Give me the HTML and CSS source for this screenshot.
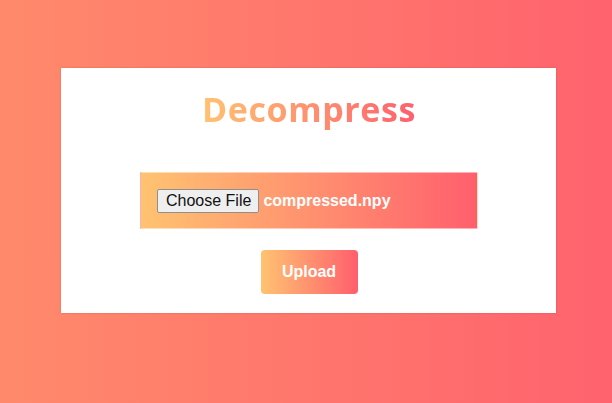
FILE: index.html
```html
<!DOCTYPE html>
<html lang="en">
<head>
<meta charset="utf-8">
<title>Decompress</title>
<link rel="stylesheet" href="styles.css">
</head>
<body>
  <main class="card">
    <h1 class="title">Decompress</h1>
    <form class="form">
      <div class="file-box">
        <span class="file-button">Choose File</span>
        <span class="file-name">compressed.npy</span>
      </div>
      <button type="button" class="upload">Upload</button>
    </form>
  </main>
</body>
</html>
```

FILE: styles.css
```css
html, body {
  height: 100%;
}
body {
  margin: 0;
  background: linear-gradient(to right, #ff8a6b, #ff636e);
  font-family: "Liberation Sans", Arial, sans-serif;
  overflow: hidden;
}
.card {
  box-sizing: border-box;
  width: 495px;
  height: 245px;
  margin: 68px 0 0 61px;
  padding-top: 19px;
  background: #fff;
  box-shadow: 0 0 2px rgba(0, 0, 0, 0.18);
  display: flex;
  flex-direction: column;
  align-items: center;
}
.title {
  margin: 0 0 0 1px;
  font-family: "Open Sans", sans-serif;
  font-size: 34px;
  font-weight: 700;
  letter-spacing: 0.6px;
  line-height: 44px;
  background: linear-gradient(to right, #ffc371, #ff5f6d);
  -webkit-background-clip: text;
  background-clip: text;
  color: transparent;
}
.form {
  margin-top: 41px;
  display: flex;
  flex-direction: column;
  align-items: center;
  padding-left: 1px;
}
.file-box {
  box-sizing: border-box;
  width: 338px;
  height: 57px;
  padding: 0 16px;
  display: flex;
  align-items: center;
  background: linear-gradient(to right, #ffc371, #ff5f6d);
  border: 1px solid rgba(255, 255, 255, 0.5);
}
.file-button {
  box-sizing: border-box;
  height: 24px;
  padding: 0 7px 0 8px;
  margin-right: 4px;
  display: inline-flex;
  align-items: center;
  font-size: 16px;
  color: #111;
  background: #efefef;
  border: 1px solid #8f8f8f;
  border-radius: 2px;
}
.file-name {
  font-size: 16px;
  font-weight: 700;
  color: #fff;
}
.upload {
  margin-top: 21px;
  width: 97px;
  height: 44px;
  padding: 0;
  border: none;
  border-radius: 4px;
  background: linear-gradient(to right, #ffc371, #ff5f6d);
  color: #fff;
  font-family: "Liberation Sans", Arial, sans-serif;
  font-size: 16px;
  font-weight: 700;
}
```
